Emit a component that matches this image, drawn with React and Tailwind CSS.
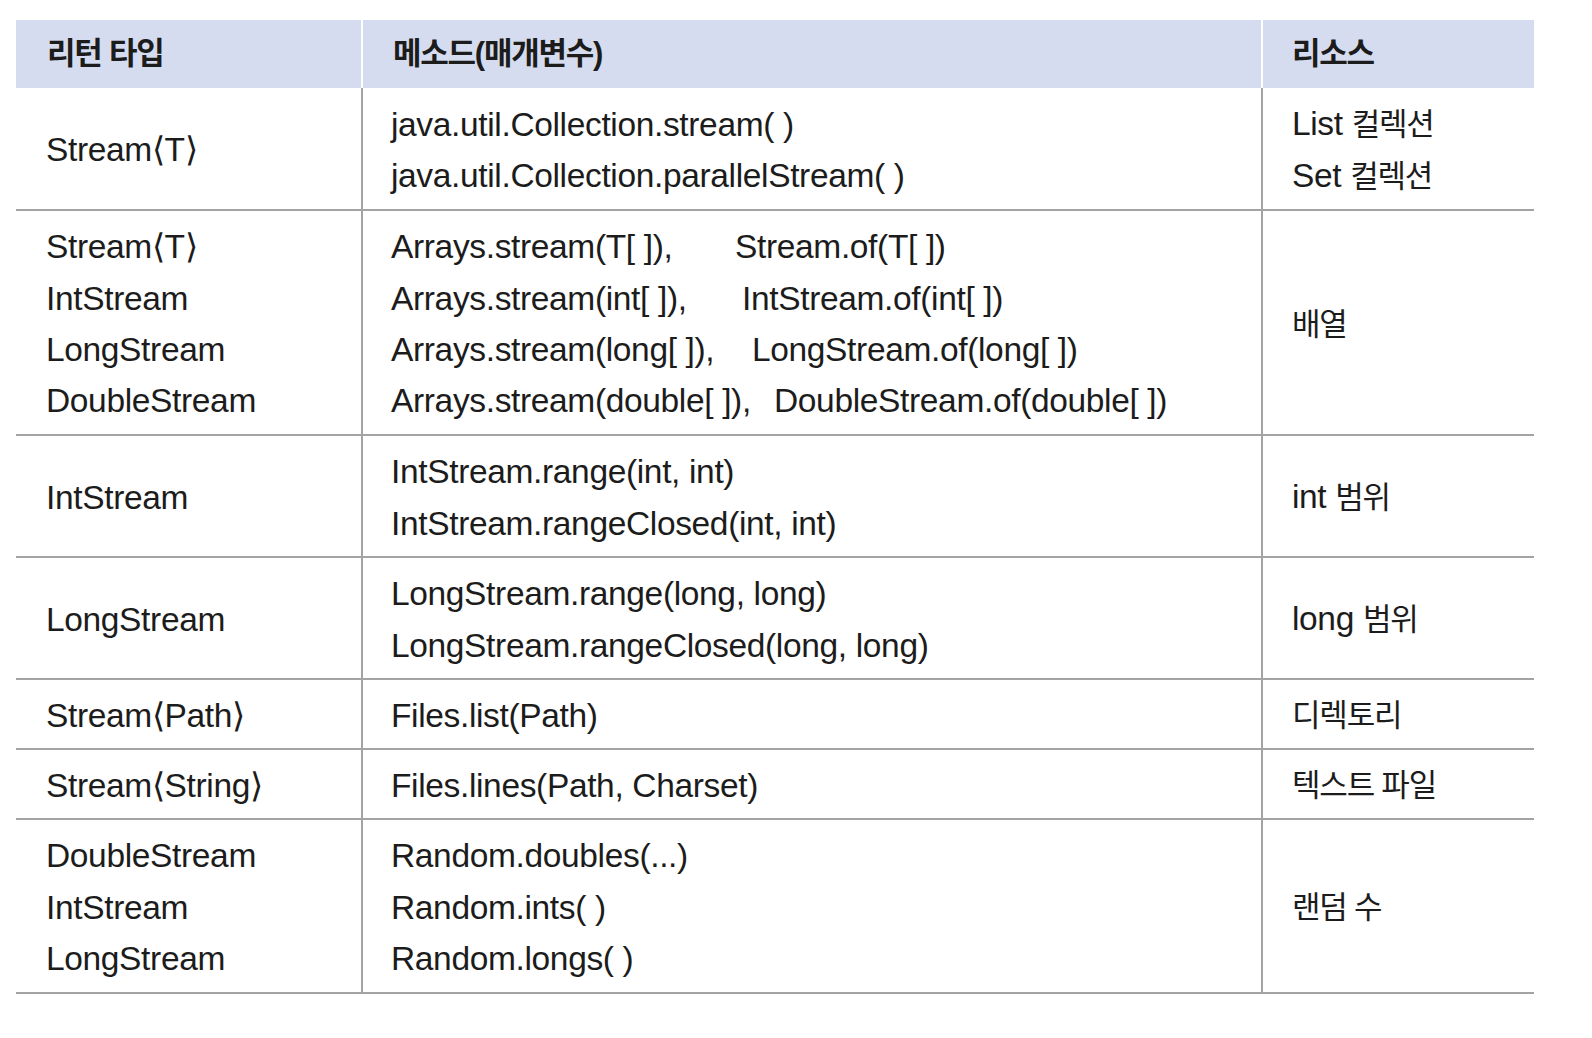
import React from "react";

const rows = [
  {
    h: "h-[123px]",
    type: ["Stream⟨T⟩"],
    methods: ["java.util.Collection.stream( )", "java.util.Collection.parallelStream( )"],
    source: [["List ", "컬렉션"], ["Set ", "컬렉션"]],
  },
  {
    h: "h-[225px]",
    type: ["Stream⟨T⟩", "IntStream", "LongStream", "DoubleStream"],
    pairs: [
      ["Arrays.stream(T[ ]),", "Stream.of(T[ ])", "w-[344px]"],
      ["Arrays.stream(int[ ]),", "IntStream.of(int[ ])", "w-[351px]"],
      ["Arrays.stream(long[ ]),", "LongStream.of(long[ ])", "w-[361px]"],
      ["Arrays.stream(double[ ]),", "DoubleStream.of(double[ ])", "w-[383px]"],
    ],
    source: [["", "배열"]],
  },
  {
    h: "h-[122px]",
    type: ["IntStream"],
    methods: ["IntStream.range(int, int)", "IntStream.rangeClosed(int, int)"],
    source: [["int ", "범위"]],
  },
  {
    h: "h-[122px]",
    type: ["LongStream"],
    methods: ["LongStream.range(long, long)", "LongStream.rangeClosed(long, long)"],
    source: [["long ", "범위"]],
  },
  { h: "h-[70px]", type: ["Stream⟨Path⟩"], methods: ["Files.list(Path)"], source: [["", "디렉토리"]] },
  { h: "h-[70px]", type: ["Stream⟨String⟩"], methods: ["Files.lines(Path, Charset)"], source: [["", "텍스트 파일"]] },
  {
    h: "h-[174px]",
    type: ["DoubleStream", "IntStream", "LongStream"],
    methods: ["Random.doubles(...)", "Random.ints( )", "Random.longs( )"],
    source: [["", "랜덤 수"]],
  },
];

function Lines({ items }) {
  return items.map((t, i) => (
    <div key={i} className="whitespace-pre">
      {t}
    </div>
  ));
}

export default function App() {
  return (
    <div
      className="min-h-screen bg-white pt-[20px] pl-[16px] text-[#1c1c1c]"
      style={{ fontFamily: '"Liberation Sans", "Noto Sans CJK KR", sans-serif' }}
    >
      <div className="w-[1518px]">
        <div className="grid grid-cols-[345px_900px_273px] h-[68px] bg-[#d6dcef] text-[31px] font-bold tracking-[-0.04em]">
          <div className="flex items-center pl-[31px]">리턴 타입</div>
          <div className="flex items-center pl-[30px] border-l-2 border-white">메소드(매개변수)</div>
          <div className="flex items-center pl-[29px] border-l-2 border-white">리소스</div>
        </div>

        {rows.map((row, i) => (
          <div
            key={i}
            className={`grid grid-cols-[345px_900px_273px] ${row.h} border-b-2 border-[#a3a3a3] text-[33.5px] leading-[51.4px] tracking-[-0.35px]`}
          >
            <div className="flex flex-col justify-center pl-[30px] pt-[3px]">
              <Lines items={row.type} />
            </div>
            <div className="flex flex-col justify-center pl-[28px] pt-[3px] border-l-2 border-[#a3a3a3]">
              {row.pairs
                ? row.pairs.map(([a, b, w], j) => (
                    <div key={j} className="flex whitespace-pre">
                      <span className={`inline-block ${w}`}>{a}</span>
                      <span>{b}</span>
                    </div>
                  ))
                : <Lines items={row.methods} />}
            </div>
            <div className="flex flex-col justify-center pl-[29px] pt-[3px] border-l-2 border-[#a3a3a3]">
              {row.source.map(([lat, kor], j) => (
                <div key={j} className="whitespace-pre">
                  {lat}
                  <span className="text-[31px] tracking-[-1.2px]">{kor}</span>
                </div>
              ))}
            </div>
          </div>
        ))}
      </div>
    </div>
  );
}
